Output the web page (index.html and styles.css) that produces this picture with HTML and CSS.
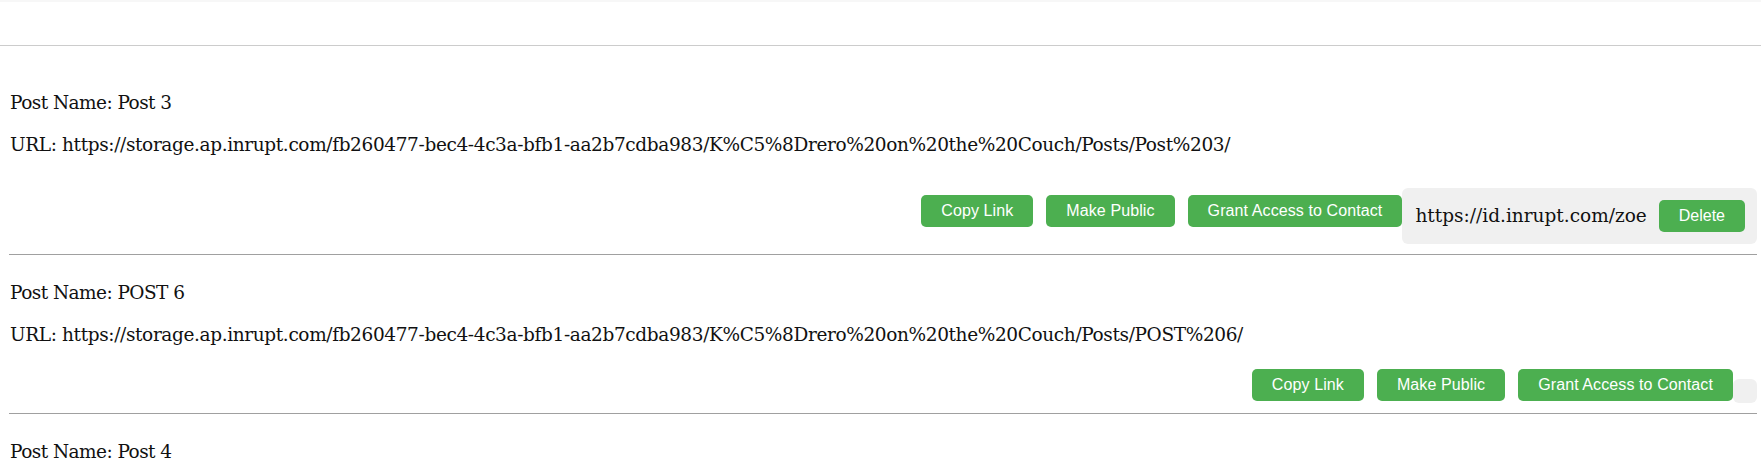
FILE: index.html
```html
<!DOCTYPE html>
<html lang="en">
<head>
<meta charset="utf-8">
<title>Posts</title>
<link rel="stylesheet" href="styles.css">
</head>
<body>
<header class="topbar"></header>
<main class="post-list">
  <section class="post">
    <p class="post-line post-name">Post Name: Post 3</p>
    <p class="post-line post-url">URL: https://storage.ap.inrupt.com/fb260477-bec4-4c3a-bfb1-aa2b7cdba983/K%C5%8Drero%20on%20the%20Couch/Posts/Post%203/</p>
    <div class="actions">
      <button class="btn">Copy Link</button>
      <button class="btn">Make Public</button>
      <button class="btn">Grant Access to Contact</button>
      <div class="access-box">
        <span class="access-id">https://id.inrupt.com/zoe</span>
        <button class="btn btn-delete">Delete</button>
      </div>
    </div>
  </section>
  <section class="post">
    <p class="post-line post-name">Post Name: POST 6</p>
    <p class="post-line post-url">URL: https://storage.ap.inrupt.com/fb260477-bec4-4c3a-bfb1-aa2b7cdba983/K%C5%8Drero%20on%20the%20Couch/Posts/POST%206/</p>
    <div class="actions">
      <button class="btn">Copy Link</button>
      <button class="btn">Make Public</button>
      <button class="btn">Grant Access to Contact</button>
      <div class="access-box"></div>
    </div>
  </section>
  <section class="post">
    <p class="post-line post-name">Post Name: Post 4</p>
    <p class="post-line post-url">URL: https://storage.ap.inrupt.com/fb260477-bec4-4c3a-bfb1-aa2b7cdba983/K%C5%8Drero%20on%20the%20Couch/Posts/Post%204/</p>
  </section>
</main>
</body>
</html>
```

FILE: styles.css
```css
html, body {
  margin: 0;
  padding: 0;
  background: #ffffff;
}

body {
  font-family: "DejaVu Serif", Georgia, serif;
  font-size: 18.5px;
  color: #111111;
}

.topbar {
  height: 43px;
  border-top: 2px solid #f7f7f7;
  border-bottom: 1px solid #cccccc;
  background: #ffffff;
}

.post-list {
  padding: 19px 4px 0 9px;
}

.post {
  padding: 7px 0 10px 0;
  border-bottom: 1px solid #a0a0a0;
}

.post-line {
  margin: 20px 0;
  padding-left: 1px;
  line-height: 22px;
  white-space: nowrap;
}

.post-name {
  letter-spacing: -0.55px;
}

.post-url {
  letter-spacing: -0.37px;
}

.actions {
  display: flex;
  justify-content: flex-end;
  align-items: center;
  margin-top: 23px;
}

.btn {
  font-family: "Liberation Sans", Arial, sans-serif;
  font-size: 16px;
  line-height: 18px;
  letter-spacing: 0.1px;
  color: #ffffff;
  background: #4caf50;
  border: none;
  border-radius: 5px;
  padding: 7px 20px;
  margin: 0 0 2px 13px;
  cursor: pointer;
}

.access-box {
  display: flex;
  align-items: center;
  gap: 12px;
  margin-top: 9px;
  padding: 12px;
  background: #f0f0f0;
  border-radius: 6px;
}

.access-id {
  line-height: 22px;
  padding-left: 1px;
}

.btn-delete {
  margin: 0;
  padding: 7px 20px;
  letter-spacing: 0;
}
```
